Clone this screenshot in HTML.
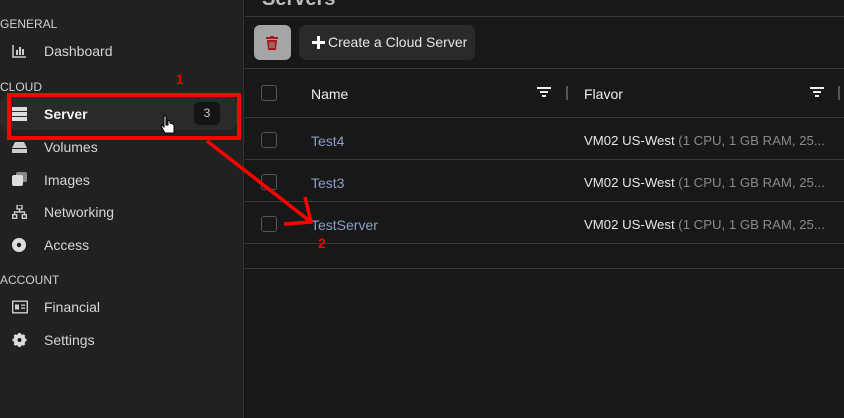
<!DOCTYPE html>
<html><head><meta charset="utf-8"><style>
*{margin:0;padding:0;box-sizing:border-box}
body{width:844px;height:418px;overflow:hidden;background:#181818;font-family:"Liberation Sans",sans-serif;position:relative;color:#ddd}
.a{position:absolute}
#side{left:0;top:0;width:244px;height:418px;background:#212121;border-right:1px solid #333}
.sec{font-size:12px;color:#d0d0d0;left:0}
.it{font-size:14px;color:#d6d6d6;left:44px}
.ic{left:12px;width:15px;height:14px}
.hl{left:0;top:97px;width:237px;height:33px;background:#2a2a2a;border-radius:8px}
.ln{left:245px;width:599px;height:1px;background:#3a3a3a}
.cb{left:261px;width:16px;height:16px;border:1.5px solid #555;border-radius:3px}
.nm{left:311px;font-size:14px;color:#8c9fc8}
.fl{left:584px;font-size:13.2px;color:#e6e6e6;white-space:nowrap}
.fl span{color:#8a8a8a}
</style></head><body>
<div id="side" class="a"></div>
<div class="a sec" style="top:17px">GENERAL</div>
<svg class="a ic" style="top:44px" viewBox="0 0 15 14"><path d="M1 1v12h13" stroke="#ccc" stroke-width="1.5" fill="none"/><rect x="4" y="6" width="2" height="5" fill="#ccc"/><rect x="7" y="3" width="2" height="8" fill="#ccc"/><rect x="10" y="5" width="2" height="6" fill="#ccc"/></svg>
<div class="a it" style="top:43px">Dashboard</div>
<div class="a sec" style="top:80px">CLOUD</div>
<div class="a hl"></div>
<svg class="a ic" style="top:107px" viewBox="0 0 15 14"><rect x="0" y="0" width="15" height="4" fill="#ddd"/><rect x="0" y="5" width="15" height="4" fill="#ddd"/><rect x="0" y="10" width="15" height="4" fill="#ddd"/></svg>
<div class="a it" style="top:106px;font-weight:bold;color:#f2f2f2">Server</div>
<div class="a" style="left:194px;top:102px;width:26px;height:23px;background:#141414;border-radius:5px;font-size:12px;color:#ccc;text-align:center;line-height:23px">3</div>
<svg class="a ic" style="top:140px" viewBox="0 0 15 14"><path d="M3 2h9l3 6H0z" fill="#ccc"/><rect x="0" y="9" width="15" height="4" fill="#ccc"/></svg>
<div class="a it" style="top:139px">Volumes</div>
<svg class="a ic" style="top:172px" viewBox="0 0 15 14"><rect x="4" y="0" width="11" height="10" rx="2" fill="#888"/><rect x="0" y="3" width="11" height="11" rx="2" fill="#ddd"/></svg>
<div class="a it" style="top:172px">Images</div>
<svg class="a ic" style="top:205px" viewBox="0 0 15 14"><rect x="5" y="0" width="5" height="4" fill="none" stroke="#ccc" stroke-width="1.4"/><path d="M7.5 4v3M2.5 10V7h10v3" stroke="#ccc" stroke-width="1.4" fill="none"/><rect x="0.7" y="9.7" width="4" height="3.6" fill="none" stroke="#ccc" stroke-width="1.4"/><rect x="10.3" y="9.7" width="4" height="3.6" fill="none" stroke="#ccc" stroke-width="1.4"/></svg>
<div class="a it" style="top:204px">Networking</div>
<svg class="a ic" style="top:238px" viewBox="0 0 15 14"><circle cx="7" cy="7" r="7" fill="#ddd"/><circle cx="7" cy="7" r="2.2" fill="#212121"/></svg>
<div class="a it" style="top:237px">Access</div>
<div class="a sec" style="top:273px">ACCOUNT</div>
<svg class="a ic" style="top:300px;width:16px" viewBox="0 0 16 13"><rect x="0.7" y="0.7" width="14.6" height="11.6" fill="none" stroke="#ccc" stroke-width="1.4"/><rect x="3" y="4" width="4" height="5" fill="#ccc"/><rect x="9" y="4" width="4" height="1.3" fill="#ccc"/><rect x="9" y="7" width="4" height="1.3" fill="#ccc"/></svg>
<div class="a it" style="top:299px">Financial</div>
<svg class="a ic" style="top:333px" viewBox="0 0 14 14"><circle cx="7" cy="7" r="4.5" fill="none" stroke="#ddd" stroke-width="3"/><path d="M7 0v14M0 7h14M2 2l10 10M12 2L2 12" stroke="#ddd" stroke-width="2.6"/><circle cx="7" cy="7" r="2" fill="#212121"/></svg>
<div class="a it" style="top:332px">Settings</div>

<div class="a" style="left:262px;top:-12px;font-size:20px;font-weight:bold;color:#bbb">Servers</div>
<div class="a ln" style="top:16px"></div>
<div class="a" style="left:254px;top:25px;width:37px;height:35px;background:#a5a5a5;border-radius:6px"></div>
<svg class="a" style="left:265px;top:36px" width="14" height="14" viewBox="0 0 14 14"><rect x="1" y="1" width="12" height="2" fill="#a01818"/><rect x="5" y="0" width="4" height="2" fill="#a01818"/><path d="M2 4h10l-1 10H3z" fill="#a01818"/><path d="M5 6v6M7 6v6M9 6v6" stroke="#a5a5a5" stroke-width="1"/></svg>
<div class="a" style="left:299px;top:25px;width:176px;height:35px;background:#2a2a2a;border-radius:7px;font-size:14px;color:#e6e6e6;line-height:35px;padding-left:29px">Create a Cloud Server</div>
<svg class="a" style="left:312px;top:36px" width="13" height="13"><path d="M6.5 0v13M0 6.5h13" stroke="#fff" stroke-width="3"/></svg>
<div class="a ln" style="top:68px"></div>
<div class="a cb" style="top:85px"></div>
<div class="a" style="left:311px;top:86px;font-size:14px;color:#eee">Name</div>
<svg class="a" style="left:537px;top:87px" width="14" height="11"><path d="M0 1h14M3 5h8M5 9h4" stroke="#eee" stroke-width="2"/></svg>
<div class="a" style="left:566px;top:86px;width:2px;height:14px;background:#555"></div>
<div class="a" style="left:584px;top:86px;font-size:14px;color:#eee">Flavor</div>
<svg class="a" style="left:810px;top:87px" width="14" height="11"><path d="M0 1h14M3 5h8M5 9h4" stroke="#eee" stroke-width="2"/></svg>
<div class="a" style="left:838px;top:86px;width:2px;height:14px;background:#555"></div>
<div class="a ln" style="top:117px"></div>
<div class="a cb" style="top:132px"></div><div class="a nm" style="top:133px">Test4</div>
<div class="a fl" style="top:133px">VM02 US-West <span>(1 CPU, 1 GB RAM, 25...</span></div>
<div class="a ln" style="top:159px"></div>
<div class="a cb" style="top:174px"></div><div class="a nm" style="top:175px">Test3</div>
<div class="a fl" style="top:175px">VM02 US-West <span>(1 CPU, 1 GB RAM, 25...</span></div>
<div class="a ln" style="top:201px"></div>
<div class="a cb" style="top:216px"></div><div class="a nm" style="top:217px">TestServer</div>
<div class="a fl" style="top:217px">VM02 US-West <span>(1 CPU, 1 GB RAM, 25...</span></div>
<div class="a ln" style="top:243px"></div>
<div class="a ln" style="top:268px"></div>

<div class="a" style="left:7px;top:93px;width:234px;height:47px;border:4px solid #f00"></div>
<div class="a" style="left:176px;top:71px;font-size:14px;font-weight:bold;color:#e00">1</div>
<div class="a" style="left:318px;top:235px;font-size:14px;font-weight:bold;color:#e00">2</div>
<svg class="a" style="left:0;top:0" width="844" height="418"><path d="M207 141L311 222M305 197L311 222L284 224" stroke="#f00" stroke-width="3.5" fill="none"/></svg>
<svg class="a" style="left:160px;top:115px" width="16" height="22" viewBox="0 0 16 22"><path d="M4 1v11l-2-2-1 1 4 7h9v-8l-1-1-3-1V6L8 5v5H6V1z" fill="#fff" stroke="#000" stroke-width="1"/></svg>
</body></html>
